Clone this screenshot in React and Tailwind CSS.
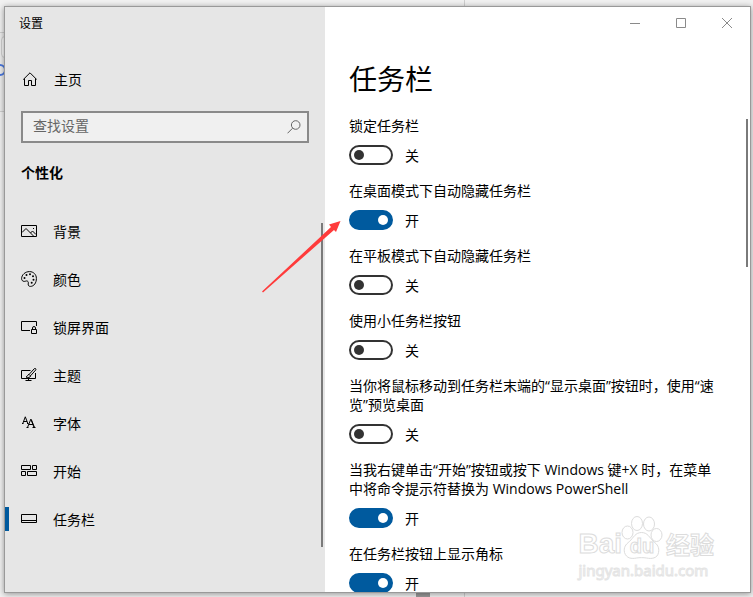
import { useState } from 'react';

const NAV_ITEMS = [
  { id: 'background', label: '背景', icon: BackgroundIcon },
  { id: 'colors', label: '颜色', icon: PaletteIcon },
  { id: 'lock', label: '锁屏界面', icon: LockScreenIcon },
  { id: 'themes', label: '主题', icon: ThemeIcon },
  { id: 'fonts', label: '字体', icon: FontIcon },
  { id: 'start', label: '开始', icon: StartIcon },
  { id: 'taskbar', label: '任务栏', icon: TaskbarIcon },
];

const SETTINGS = [
  { id: 'lock-taskbar', label: '锁定任务栏', on: false },
  { id: 'hide-desktop', label: '在桌面模式下自动隐藏任务栏', on: true },
  { id: 'hide-tablet', label: '在平板模式下自动隐藏任务栏', on: false },
  { id: 'small-buttons', label: '使用小任务栏按钮', on: false },
  {
    id: 'peek',
    label: '当你将鼠标移动到任务栏末端的“显示桌面”按钮时，使用“速\n览”预览桌面',
    on: false,
  },
  {
    id: 'powershell',
    label: '当我右键单击“开始”按钮或按下 Windows 键+X 时，在菜单\n中将命令提示符替换为 Windows PowerShell',
    on: true,
  },
  { id: 'badges', label: '在任务栏按钮上显示角标', on: true },
];

function Icon({ children }) {
  return (
    <svg
      width="16"
      height="16"
      viewBox="0 0 16 16"
      fill="none"
      stroke="currentColor"
      strokeWidth="1"
      className="shrink-0"
      aria-hidden="true"
    >
      {children}
    </svg>
  );
}

function HomeIcon() {
  return (
    <Icon>
      <path d="M2.200 8.600 9 1.800l6.800 6.800M3.500 7.500v7h4v-5h3v5h4v-7" />
    </Icon>
  );
}

function BackgroundIcon() {
  return (
    <Icon>
      <path d="M.5 2.500h15v11H.5z" />
      <path d="m1 9.500 4-4 7.500 7.500M9.500 10l2-2 3.500 3.500" />
      <path d="M12 5.500h1" />
    </Icon>
  );
}

function PaletteIcon() {
  return (
    <Icon>
      <path d="M8.500.600C12.500.600 15.400 3.500 15.400 7.500c0 4.300-2.400 7.900-6 7.900-1.500 0-2.400-.900-2.200-2.400.200-1.400.3-2.400-.8-2.900-1.200-.5-1.900.3-3.100.3C1.500 10.400.6 9.100.6 7.700.6 3.800 4.200.6 8.500.6z" />
      <g fill="currentColor" stroke="none">
        <circle cx="3.500" cy="7" r="1" />
        <circle cx="5.500" cy="4" r="1" />
        <circle cx="9" cy="3.200" r="1" />
        <circle cx="12" cy="5.300" r="1" />
        <circle cx="12.500" cy="8.700" r="1" />
        <circle cx="10.700" cy="11.800" r="1" />
      </g>
    </Icon>
  );
}

function LockScreenIcon() {
  return (
    <Icon>
      <path d="M9 11.500H.5v-9h15V7" />
      <path d="M10.500 10.500h5v4h-5zM11.500 10.500V9a1.500 1.500 0 0 1 3 0v1.500" />
    </Icon>
  );
}

function ThemeIcon() {
  return (
    <Icon>
      <path d="M9.500 3.500h-9v8h14V6M7.500 11.500v2M4.500 13.500h6" />
      <path d="M8 7.500 13.300 1.700c.9-.9 2.200.3 1.400 1.300L9.500 8.800M8 7.300l1.700 1.700C9.200 10.500 7 11 5 10c1.500-.300 1.300-2.200 3-2.700z" />
    </Icon>
  );
}

function FontIcon() {
  return (
    <Icon>
      <path d="M1.800 8.500 4.300 1.800 6.800 8.500M2.700 6.500h3.300" />
      <path d="M1 8.500h1.500M6 8.500h1.500M5.500 12.500h2M11.500 12.500h3" />
      <path d="m6.500 12.500 3.300-8.300 3.300 8.300M7.600 9.500h4.400M10.300 4.500l3.200 8" />
    </Icon>
  );
}

function StartIcon() {
  return (
    <Icon>
      <path d="M.5 2.500h9v4h-9zM11.500 2.500h4v4h-4zM.5 8.500h4v4h-4zM6.500 8.500h9v4h-9z" />
    </Icon>
  );
}

function TaskbarIcon() {
  return (
    <Icon>
      <path d="M.5 3.500h15v8H.5zM.5 9.500h15" />
    </Icon>
  );
}

function Sidebar() {
  const [active, setActive] = useState('taskbar');

  return (
    <aside className="relative w-80 shrink-0 bg-[#e6e6e6]">
      <h2 className="px-3.5 pt-2 text-xs leading-[18px]">设置</h2>

      <a href="#home" className="mt-[38px] flex h-4 items-center gap-4 pl-4 text-sm leading-4">
        <HomeIcon />
        <span className="pt-0.5 pl-px">主页</span>
      </a>

      <div className="mx-4 mt-6 flex h-8 items-center border-2 border-[#8a8a8a] bg-[#f0f0f0] pr-1.5 pl-2.5">
        <input
          type="search"
          aria-label="查找设置"
          placeholder="查找设置"
          className="min-w-0 flex-1 bg-transparent pb-0.5 text-sm leading-5 outline-none placeholder:text-[#666]"
        />
        <svg width="14" height="14" viewBox="0 0 14 14" fill="none" stroke="#666" aria-hidden="true">
          <circle cx="8.700" cy="5" r="4.300" />
          <path d="M5.600 8.200.5 13.300" />
        </svg>
      </div>

      <h3 className="mt-5 px-4 text-sm leading-5 font-bold">个性化</h3>

      <nav className="mt-6">
        {NAV_ITEMS.map(({ id, label, icon: NavIcon }) => (
          <a
            key={id}
            href={`#${id}`}
            onClick={() => setActive(id)}
            className="relative flex h-12 items-center gap-4 pl-4 text-sm leading-5"
          >
            {active === id && <span className="absolute left-0 h-6 w-1 bg-[#005a9e]" />}
            <NavIcon />
            <span className="pt-0.5">{label}</span>
          </a>
        ))}
      </nav>

      <div className="absolute top-54 right-0.5 h-81 w-0.5 bg-[#7a7a7a]" />
    </aside>
  );
}

function Toggle({ id, label, defaultOn }) {
  const [on, setOn] = useState(defaultOn);

  return (
    <div>
      <label htmlFor={id} className="block text-sm leading-[19px] whitespace-pre-line">
        {label}
      </label>
      <div className="mt-2.5 flex h-5 items-center gap-3">
        <input
          id={id}
          type="checkbox"
          role="switch"
          checked={on}
          onChange={(e) => setOn(e.target.checked)}
          className="flex h-5 w-11 shrink-0 appearance-none items-center rounded-full border-2 border-[#333] px-[3px] before:size-2.5 before:rounded-full before:bg-[#333] checked:justify-end checked:border-[#005a9e] checked:bg-[#005a9e] checked:before:bg-white"
        />
        <span className="pt-0.5 text-sm leading-5">{on ? '开' : '关'}</span>
      </div>
    </div>
  );
}

function WindowButtons() {
  return (
    <div className="flex h-8 shrink-0 justify-end text-[#8a8a8a]">
      <button type="button" aria-label="最小化" className="flex w-[46px] items-center justify-center">
        <svg width="10" height="10" stroke="currentColor">
          <path d="M0 5.500h10" />
        </svg>
      </button>
      <button type="button" aria-label="最大化" className="flex w-[46px] items-center justify-center">
        <svg width="10" height="10" fill="none" stroke="currentColor">
          <path d="M.5.500h9v9h-9z" />
        </svg>
      </button>
      <button type="button" aria-label="关闭" className="flex w-[46px] items-center justify-center">
        <svg width="10" height="10" stroke="currentColor">
          <path d="m0 0 10 10M10 0 0 10" />
        </svg>
      </button>
    </div>
  );
}

function Watermark() {
  return (
    <div className="pointer-events-none absolute right-9 bottom-3 text-white" aria-hidden="true">
      <div className="flex h-12 items-end font-['Liberation_Sans','Noto_Sans_CJK_SC',sans-serif] text-[28px] leading-8 font-bold [-webkit-text-stroke:1px_#dcdcdc]">
        <span>Bai</span>
        <span className="relative flex w-10 justify-center">
          <svg
            width="42"
            height="48"
            viewBox="0 0 42 48"
            fill="white"
            stroke="#dcdcdc"
            className="absolute -left-px bottom-0"
          >
            <ellipse cx="6.500" cy="20.500" rx="5.500" ry="6.500" />
            <ellipse cx="16" cy="11.500" rx="5.500" ry="7" />
            <ellipse cx="28" cy="12" rx="5.500" ry="7" />
            <ellipse cx="35.500" cy="23" rx="5.500" ry="6.500" />
            <path d="M20.500 20.500c-6 0-8 5-12 9-4 3-6 6-5 11 2 6 7 6.500 12 5.500 3-.5 7-.5 10 0 5 1 11 .5 12-5.500 1-5-1-8-5-11-4-4-6-9-12-9z" />
          </svg>
          <span className="relative text-xl leading-7">du</span>
        </span>
        <span className="pl-1 text-2xl leading-7">经验</span>
      </div>
      <div className="font-['Noto_Sans',sans-serif] text-[15px] leading-5 [-webkit-text-stroke:1px_#e4e4e4]">
        jingyan.baidu.com
      </div>
    </div>
  );
}

function Arrow() {
  return (
    <svg
      width="80"
      height="73"
      viewBox="0 0 80 73"
      fill="#ff3b3b"
      className="pointer-events-none absolute top-[213px] left-[257px]"
      aria-hidden="true"
    >
      <path d="M0 71.500 69 7 67 4.500 78.500 1 74 12l-2-2L1 72.500z" />
    </svg>
  );
}

export default function App() {
  return (
    <div className="relative flex h-screen overflow-hidden bg-[#f1f1f1] pt-1.5 pr-0.5 pb-1 pl-1 font-['Open_Sans','Noto_Sans_CJK_SC',sans-serif] text-black">
      {/* strip of the window behind */}
      <div className="absolute top-8 left-0 h-20 w-1 border-y border-[#cfcfcf] bg-[#ececec]" />
      <div className="absolute top-9 left-px h-5.5 w-2 rounded-sm border border-[#cfcfcf] bg-[#f8f8f8]" />
      <div className="absolute top-16 -left-1.5 size-3 rounded-full border-2 border-[#4a78e0]" />
      <div className="absolute bottom-0 left-104 h-1 w-3.5 bg-[#999]" />
      <div className="absolute inset-y-0 left-116 w-px bg-[#cfcfcf]" />

      <div className="relative flex min-w-0 flex-1 overflow-hidden border border-[#999] bg-white shadow-[0_1px_6px_rgba(0,0,0,0.4)]">
        <Sidebar />
        <main className="relative flex min-w-0 flex-1 flex-col">
          <WindowButtons />
          <div className="px-6 pt-5">
            <h1 className="text-[28px] leading-10">任务栏</h1>
            <div className="mt-[17px] flex flex-col gap-4">
              {SETTINGS.map((s) => (
                <Toggle key={s.id} id={s.id} label={s.label} defaultOn={s.on} />
              ))}
            </div>
          </div>
          <div className="absolute top-28 right-0.5 h-37 w-0.5 bg-[#7a7a7a]" />
          <Watermark />
        </main>
        <Arrow />
      </div>
    </div>
  );
}
